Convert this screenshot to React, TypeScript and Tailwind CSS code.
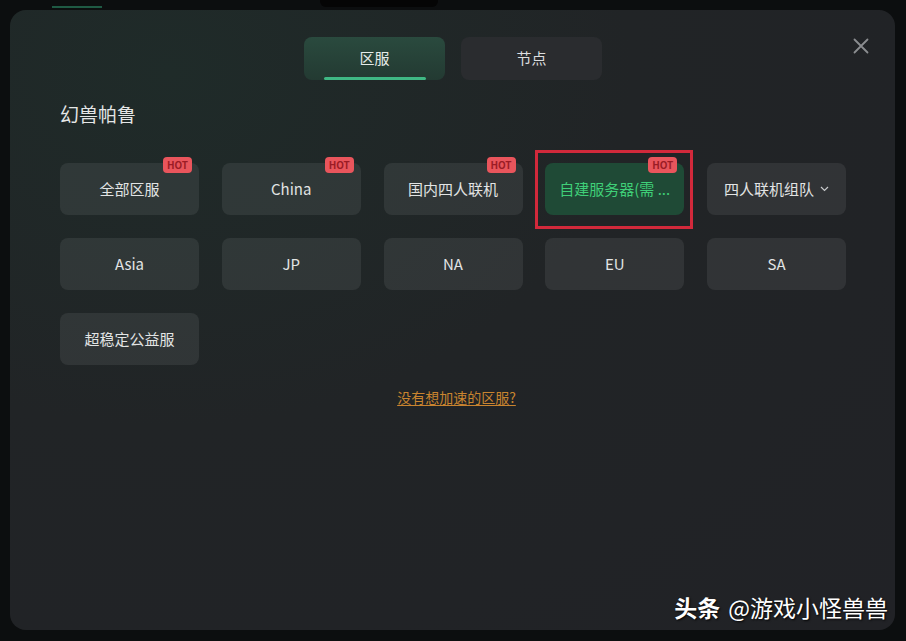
import React from "react";

const FONT = { fontFamily: '"Noto Sans CJK SC", "Noto Sans", sans-serif' };

function Hot() {
  return (
    <span className="absolute -top-[6px] right-[7px] flex h-[16px] w-[29px] items-center justify-center rounded-[4px] bg-[#e9555c] text-[10px] font-bold leading-none text-[#9b1c25]">
      HOT
    </span>
  );
}

type Item = { label: string; hot?: boolean; selected?: boolean; chevron?: boolean };

const items: Item[] = [
  { label: "全部区服", hot: true },
  { label: "China", hot: true },
  { label: "国内四人联机", hot: true },
  { label: "自建服务器(需 ...", hot: true, selected: true },
  { label: "四人联机组队", chevron: true },
  { label: "Asia" },
  { label: "JP" },
  { label: "NA" },
  { label: "EU" },
  { label: "SA" },
  { label: "超稳定公益服" },
];

export default function App() {
  return (
    <div className="relative flex h-[641px] w-[906px] flex-col bg-[#0c0e0f]" style={FONT}>
      {/* background hint above modal */}
      <div className="flex h-[10px] shrink-0 items-start">
        <div className="ml-[52px] mt-[6px] h-[2px] w-[50px] bg-[#1f5a44]" />
        <div className="ml-[218px] h-[7px] w-[118px] rounded-b-[6px] bg-[#050505]" />
      </div>
      <div className="flex flex-1 pb-[11px] pl-[10px] pr-[11px]">
        <div className="relative flex-1 rounded-[16px] bg-[radial-gradient(ellipse_at_18%_10%,#1f2b29_0%,#212426_45%,#212226_100%)] pl-[50px] pr-[48px] pt-[27px]">
          {/* close */}
          <svg className="absolute right-[26px] top-[28px]" width="16" height="16" viewBox="0 0 16 16" fill="none">
            <path d="M1.5 1.5 L14.5 14.5 M14.5 1.5 L1.5 14.5" stroke="#8b8d90" strokeWidth="1.8" strokeLinecap="round" />
          </svg>

          {/* tabs */}
          <div className="flex justify-center gap-[16px] pr-[1px]">
            <div className="relative flex h-[43px] w-[141px] items-center justify-center rounded-[8px] bg-[linear-gradient(180deg,#2a4a3e,#233a32)] pb-[1px] text-[15px] text-[#e6ece9]">
              区服
              <div className="absolute bottom-[0px] left-[20px] h-[3px] w-[102px] rounded-full bg-[#3fb884]" />
            </div>
            <div className="flex h-[43px] w-[141px] items-center justify-center rounded-[8px] bg-[#2a2c2f] pb-[1px] text-[15px] text-[#dcdddf]">
              节点
            </div>
          </div>

          <div className="mt-[21px] text-[19px] leading-[26px] text-[#e4e6e6]">幻兽帕鲁</div>

          <div className="mt-[36px] grid grid-cols-[repeat(5,139px)] gap-x-[22.75px] gap-y-[23px]">
            {items.map((it) => (
              <div
                key={it.label}
                className={
                  "relative flex h-[52px] items-center justify-center rounded-[8px] text-[15px] " +
                  (it.selected
                    ? "bg-[#1f4a36] text-[#3fcf78]"
                    : "bg-white/[0.075] text-[#e2e4e4]")
                }
              >
                <span className="flex items-center gap-[6px]">
                  {it.label}
                  {it.chevron && (
                    <svg width="9" height="6" viewBox="0 0 9 6" fill="none">
                      <path d="M1 1 L4.5 4.5 L8 1" stroke="#c8cacc" strokeWidth="1.2" />
                    </svg>
                  )}
                </span>
                {it.hot && <Hot />}
                {it.selected && (
                  <div className="pointer-events-none absolute -bottom-[14px] -left-[10px] -right-[9px] -top-[13px] border-[3px] border-[#d2293b]" />
                )}
              </div>
            ))}
          </div>

          <div className="mt-[22px] flex justify-center pl-[6px]">
            <span className="text-[14px] leading-[20px] text-[#c9842f] underline underline-offset-2">
              没有想加速的区服?
            </span>
          </div>

          {/* watermark */}
          <div className="absolute bottom-[6px] right-[7px] flex items-baseline gap-[8px] text-[23px] text-white [text-shadow:1px_1px_2px_rgba(0,0,0,0.9)]">
            <span className="font-bold">头条</span>
            <span>@游戏小怪兽兽</span>
          </div>
        </div>
      </div>
    </div>
  );
}
